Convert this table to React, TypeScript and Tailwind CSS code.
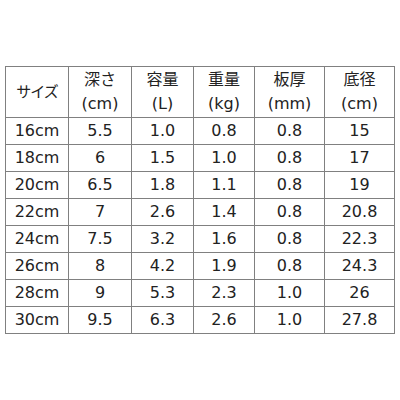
import React from 'react';

const rows: string[][] = [
  ['16cm', '5.5', '1.0', '0.8', '0.8', '15'],
  ['18cm', '6', '1.5', '1.0', '0.8', '17'],
  ['20cm', '6.5', '1.8', '1.1', '0.8', '19'],
  ['22cm', '7', '2.6', '1.4', '0.8', '20.8'],
  ['24cm', '7.5', '3.2', '1.6', '0.8', '22.3'],
  ['26cm', '8', '4.2', '1.9', '0.8', '24.3'],
  ['28cm', '9', '5.3', '2.3', '1.0', '26'],
  ['30cm', '9.5', '6.3', '2.6', '1.0', '27.8'],
];

const headers: [string, string][] = [
  ['深さ', '(cm)'],
  ['容量', '(L)'],
  ['重量', '(kg)'],
  ['板厚', '(mm)'],
  ['底径', '(cm)'],
];

const widths = ['w-[63px]', 'w-[63px]', 'w-[62px]', 'w-[61px]', 'w-[70px]', 'w-[70px]'];

export default function App() {
  return (
    <div
      className="w-[400px] h-[400px] bg-white pt-[66px] pl-[5px] text-[#222] text-[16px]"
      style={{ fontFamily: '"DejaVu Sans", "Noto Sans CJK JP", sans-serif' }}
    >
      <table className="border-collapse table-fixed">
        <colgroup>
          {widths.map((w, i) => (
            <col key={i} className={w} />
          ))}
        </colgroup>
        <thead>
          <tr className="h-[51px]">
            <th className="border border-[#808080] font-normal text-center p-0 text-[15px] tracking-[-1px]">サイズ</th>
            {headers.map(([a, b]) => (
              <th key={a} className="border border-[#808080] font-normal text-center p-0 leading-[24px]">
                <div>{a}</div>
                <div>{b}</div>
              </th>
            ))}
          </tr>
        </thead>
        <tbody>
          {rows.map((r) => (
            <tr key={r[0]} className="h-[27px]">
              {r.map((c, i) => (
                <td key={i} className="border border-[#808080] text-center p-0 leading-none">
                  {c}
                </td>
              ))}
            </tr>
          ))}
        </tbody>
      </table>
    </div>
  );
}
